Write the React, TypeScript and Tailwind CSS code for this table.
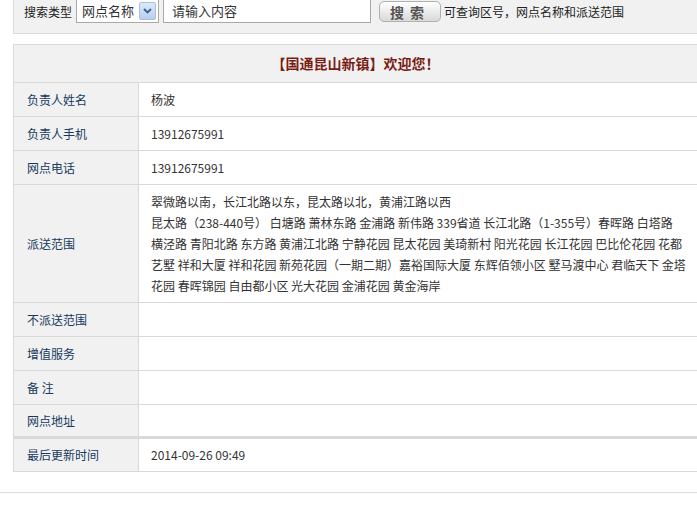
import React from "react";

// 网点详情页：顶部搜索条 + 网点信息表
const FONT = { fontFamily: '"Noto Sans CJK SC", "Noto Sans", sans-serif' };

const ROWS: { label: string; value?: string; h: string }[] = [
  { label: "负责人姓名", value: "杨波", h: "h-[34px]" },
  { label: "负责人手机", value: "13912675991", h: "h-[34px]" },
  { label: "网点电话", value: "13912675991", h: "h-[34px]" },
];

const RANGE = [
  "翠微路以南，长江北路以东，昆太路以北，黄浦江路以西",
  "昆太路（238-440号） 白塘路 萧林东路 金浦路 新伟路 339省道 长江北路（1-355号）春晖路 白塔路",
  "横泾路 青阳北路 东方路 黄浦江北路 宁静花园 昆太花园 美琦新村 阳光花园 长江花园 巴比伦花园 花都",
  "艺墅 祥和大厦 祥和花园 新苑花园（一期二期）嘉裕国际大厦 东辉佰领小区 墅马渡中心 君临天下 金塔",
  "花园 春晖锦园 自由都小区 光大花园 金浦花园 黄金海岸",
];

const EMPTY = ["不派送范围", "增值服务", "备 注", "网点地址"];

function Row({ label, value, h, last }: { label: string; value?: string; h: string; last?: boolean }) {
  return (
    <div className={`flex ${h} ${last ? "border-b-[3px]" : "border-b"} border-[#d9d9d9]`}>
      <div className="flex w-[125px] shrink-0 items-center border-r border-[#d9d9d9] bg-[#f1f1f1] pl-[13px] text-[12px] text-[#173a5e]">
        {label}
      </div>
      <div className="flex items-center pl-[12px] text-[12px] text-[#333]">{value}</div>
    </div>
  );
}

export default function App() {
  return (
    <div className="h-[512px] w-[697px] overflow-hidden bg-white" style={FONT}>
      {/* search bar */}
      <div className="ml-[13px] flex h-[34px] items-start border-b border-l border-[#dcdcdc] bg-[#f1f1f1] text-[12px] text-[#222]">
        <span className="ml-[10px] mt-[3px]">搜索类型</span>
        <div className="ml-[4px] flex h-[23px] w-[83px] items-center justify-between border border-t-0 border-[#a9a9a9] bg-white pl-[5px] pr-[2px] text-[13px] text-[#333]">
          <span>网点名称</span>
          <span className="flex h-[18px] w-[17px] items-center justify-center rounded-[2px] border border-[#a8c0e0] bg-gradient-to-b from-[#dde9f8] to-[#b9cfee]">
            <svg width="9" height="6" viewBox="0 0 9 6">
              <path d="M1 1l3.5 3.5L8 1" fill="none" stroke="#3c5f96" strokeWidth="1.8" />
            </svg>
          </span>
        </div>
        <div className="ml-[4px] flex h-[23px] w-[208px] items-center border border-t-0 border-[#a9a9a9] bg-white pl-[8px] text-[13px] text-[#333]">
          请输入内容
        </div>
        <button className="ml-[8px] mt-[1px] h-[21px] w-[62px] rounded-[5px] border border-[#b0b0b0] bg-gradient-to-b from-white to-[#d9d9d9] text-[14px] font-bold leading-none tracking-[6px] text-[#555]">
          搜索
        </button>
        <span className="ml-[3px] mt-[3px]">可查询区号，网点名称和派送范围</span>
      </div>

      {/* info table */}
      <div className="ml-[13px] mt-[10px] border-l border-t border-[#d9d9d9]">
        <div className="flex h-[38px] items-center justify-center border-b border-[#d9d9d9] bg-[#f1f1f1] text-[14px] font-bold text-[#7a1c14]">
          【国通昆山新镇】欢迎您！
        </div>
        {ROWS.map((r) => (
          <Row key={r.label} {...r} />
        ))}
        <div className="flex h-[118px] border-b border-[#d9d9d9]">
          <div className="flex w-[125px] shrink-0 items-center border-r border-[#d9d9d9] bg-[#f1f1f1] pl-[13px] text-[12px] text-[#173a5e]">
            派送范围
          </div>
          <div className="flex flex-col justify-center pl-[12px] text-[12px] leading-[21px] text-[#333]">
            {RANGE.map((l) => (
              <div key={l} className="whitespace-nowrap">{l}</div>
            ))}
          </div>
        </div>
        {EMPTY.map((l, i) => (
          <Row key={l} label={l} h="h-[34px]" last={i === EMPTY.length - 1} />
        ))}
        <Row label="最后更新时间" value="2014-09-26 09:49" h="h-[33px]" />
      </div>

      <div className="mt-[20px] border-b border-[#dcdcdc]" />
    </div>
  );
}
